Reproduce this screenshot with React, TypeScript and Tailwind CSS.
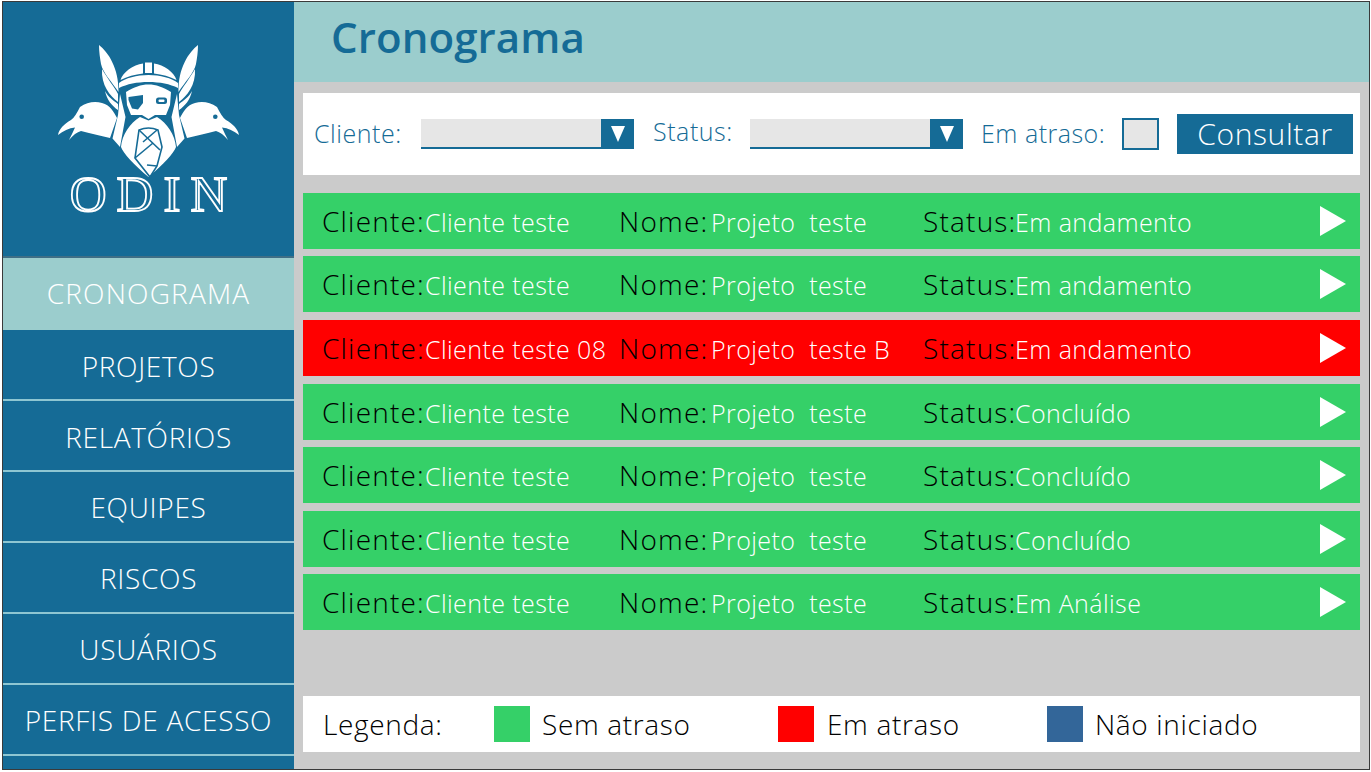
import React from "react";

const font = "[font-family:'Open_Sans',sans-serif]";

function Half() {
  return (
    <g>
      <path d="M99,45 C108,52 119,68 118.5,92 C112,82 103,73 101,64 C100,58 99,52 99,45Z" />
      <path d="M102,69 C107,78 115,88 118,94 L118,102 C110,96 101,85 102,69Z" />
      <path d="M105,91 C108,97 113,100 118,104 L118,110 C112,106 107,100 105,91Z" />
      <path d="M117,118 C114,112 110,105 102,103 C95,101 87,102 80,107 C77,113 74,118 71,120 C64,124 59,129 58,135 C63,131 69,128 75,127.5 C73,132 71,136 69,140 C73,135 77,132 81,131 C90,133 100,136 110,138Z" />
      <circle cx="81.7" cy="116.7" r="2.3" fill="#156b96" />
      <path d="M120.5,80 C123,72 133,65 143,63.5 L143,73.5 C135,74.5 127,76.5 120.5,80Z" />
      <path d="M120,94 L125.5,117 L120,147 L112.5,138.5 L118,115Z" />
    </g>
  );
}

function Logo() {
  return (
    <svg width="190" height="136" viewBox="54 43 190 136" fill="#ffffff">
      <Half />
      <g transform="translate(297,0) scale(-1,1)">
        <Half />
      </g>
      <path d="M145,62.5 L152,62.5 L152,73 L145,73Z" />
      <path d="M119,88 L119,83 C125,78 137,75 148.5,75 C160,75 172,78 178,83 L178,88 C170,84 160,82 148.5,82 C137,82 127,84 119,88Z" />
      <path d="M126,92 C134,87 141,84.5 148.5,84.5 C156,84.5 163,87 171,92 L170,105 L166,115 L155,115 L148.5,119 L142,115 L131,115 L127,105Z" />
      <path d="M128.5,97 L143,95 L143,103 L138,109.5 L132,108.5 L128.5,100Z" fill="#156b96" />
      <rect x="156" y="97.5" width="11" height="6.5" rx="2.5" fill="#156b96" />
      <rect x="158.5" y="99.5" width="6" height="2.5" rx="1" fill="#ffffff" />
      <path d="M148.5,120.5 L140,117 C130,123 122,135 121,147 C123,153 134,165 148.5,177 C163,165 174,153 176,147 C175,135 167,123 157,117Z" />
      <g fill="none" stroke="#156b96" strokeWidth="1.6">
        <path d="M139,130 C145,127.5 152,127.5 158,130 L162,147 L157,166 L150,177 L135,158Z" />
        <path d="M139,130 L160,150" />
        <path d="M157,130 L143,142" />
        <path d="M135,158 L153,143" />
        <path d="M147,165 L157,166" />
      </g>
    </svg>
  );
}

const Triangle = ({ cls }: { cls: string }) => (
  <svg className={cls} viewBox="0 0 26 30" fill="#ffffff">
    <polygon points="0,0 26,15 0,30" />
  </svg>
);

const menu = [
  { t: "PROJETOS", c: "pt-[2px]" },
  { t: "RELATÓRIOS", c: "pt-[2px]" },
  { t: "EQUIPES", c: "pt-0" },
  { t: "RISCOS", c: "pt-0" },
  { t: "USUÁRIOS", c: "pt-0" },
  { t: "PERFIS DE ACESSO", c: "pt-[1px]" },
];

const rows = [
  { c: "Cliente teste", n: "Projeto  teste", s: "Em andamento", red: false },
  { c: "Cliente teste", n: "Projeto  teste", s: "Em andamento", red: false },
  { c: "Cliente teste 08", n: "Projeto  teste B", s: "Em andamento", red: true },
  { c: "Cliente teste", n: "Projeto  teste", s: "Concluído", red: false },
  { c: "Cliente teste", n: "Projeto  teste", s: "Concluído", red: false },
  { c: "Cliente teste", n: "Projeto  teste", s: "Concluído", red: false },
  { c: "Cliente teste", n: "Projeto  teste", s: "Em Análise", red: false },
];

function Select({ width }: { width: string }) {
  return (
    <div className={`flex h-[30px] justify-end border-b-2 border-[#156b96] bg-[#e6e6e6] ${width}`}>
      <div className="flex h-[30px] w-[33px] items-center justify-center bg-[#156b96]">
        <svg width="14" height="16" viewBox="0 0 14 16" fill="#ffffff">
          <polygon points="0,0 14,0 7,16" />
        </svg>
      </div>
    </div>
  );
}

function Field({ label, value, width }: { label: string; value: string; width: string }) {
  return (
    <div className="flex items-baseline whitespace-pre">
      <span className={`text-[28px] tracking-[1.2px] text-black ${width}`}>{label}</span>
      <span className="text-[25px] tracking-[0.42px] text-white">{value}</span>
    </div>
  );
}

export default function App() {
  return (
    <div className={`h-[772px] w-[1371px] overflow-hidden bg-white pl-[2px] pt-[1px] font-light ${font}`}>
      <div className="flex h-[769px] w-[1368px] border border-[#3a3a3a]">
        <aside className="flex w-[291px] shrink-0 flex-col bg-[#156b96]">
          <div className="flex h-[256px] shrink-0 flex-col items-center border-b-2 border-[#3f6f86] pt-[41px]">
            <Logo />
            <div className="mt-[-10px] pl-[10px] font-['Liberation_Serif',serif] text-[51px] leading-[50px] tracking-[10px] text-[#156b96] [-webkit-text-stroke:1.8px_#ffffff]">
              ODIN
            </div>
          </div>
          <div className="flex h-[72px] shrink-0 items-center justify-center bg-[#9bcdcd] pb-[2px] text-[28px] tracking-[1.2px] text-white">
            CRONOGRAMA
          </div>
          {menu.map((m) => (
            <div
              key={m.t}
              className={`flex h-[71px] shrink-0 items-center justify-center border-b-2 border-[#8ec6d2] text-[28px] tracking-[0.7px] text-white ${m.c}`}
            >
              {m.t}
            </div>
          ))}
        </aside>
        <main className="flex min-w-0 flex-1 flex-col bg-[#cbcbcb]">
          <header className="flex h-[80px] shrink-0 items-center bg-[#9bcdcd] pb-[11px] pl-[37px]">
            <h1 className="text-[42px] font-semibold tracking-[0.1px] text-[#156b96]">Cronograma</h1>
          </header>
          <div className="mt-[11px] flex flex-col pl-[9px] pr-[9px]">
            <section className="flex h-[82px] items-center bg-white pl-[11px] text-[#156b96]">
              <span className="w-[107px] text-[25px] tracking-[0.55px]">Cliente:</span>
              <Select width="w-[213px]" />
              <span className="ml-[19px] w-[97px] pb-[4px] text-[25px] tracking-[0.55px]">Status:</span>
              <Select width="w-[213px]" />
              <span className="ml-[18px] w-[141px] text-[25px] tracking-[0.5px]">Em atraso:</span>
              <div className="h-[32px] w-[37px] border-2 border-[#156b96] bg-[#e6e6e6]" />
              <button className="ml-[18px] h-[40px] w-[176px] bg-[#156b96] text-[30px] leading-[40px] tracking-[0.6px] text-white">
                Consultar
              </button>
            </section>
            <section className="mt-[17.8px] flex flex-col gap-[7.6px]">
              {rows.map((r, i) => (
                <div
                  key={i}
                  className={`flex h-[56px] items-center pl-[19px] ${r.red ? "bg-[#ff0000]" : "bg-[#35d068]"}`}
                >
                  <div className="w-[297px]">
                    <Field label="Cliente:" value={r.c} width="w-[103px]" />
                  </div>
                  <div className="w-[304px]">
                    <Field label="Nome:" value={r.n} width="w-[92px]" />
                  </div>
                  <div className="flex-1">
                    <Field label="Status:" value={r.s} width="w-[92px]" />
                  </div>
                  <Triangle cls="mr-[14px] h-[30px] w-[26px]" />
                </div>
              ))}
            </section>
            <section className="mt-[65.6px] flex h-[56px] items-center bg-white pl-[20px] pt-[1px] text-[28px] tracking-[0.65px] text-black">
              <span className="w-[171px]">Legenda:</span>
              <div className="h-[36px] w-[36px] bg-[#35d068]" />
              <span className="ml-[12px] w-[236px]">Sem atraso</span>
              <div className="h-[36px] w-[36px] bg-[#ff0000]" />
              <span className="ml-[13px] w-[220px]">Em atraso</span>
              <div className="h-[36px] w-[36px] bg-[#336699]" />
              <span className="ml-[12px]">Não iniciado</span>
            </section>
          </div>
        </main>
      </div>
    </div>
  );
}
